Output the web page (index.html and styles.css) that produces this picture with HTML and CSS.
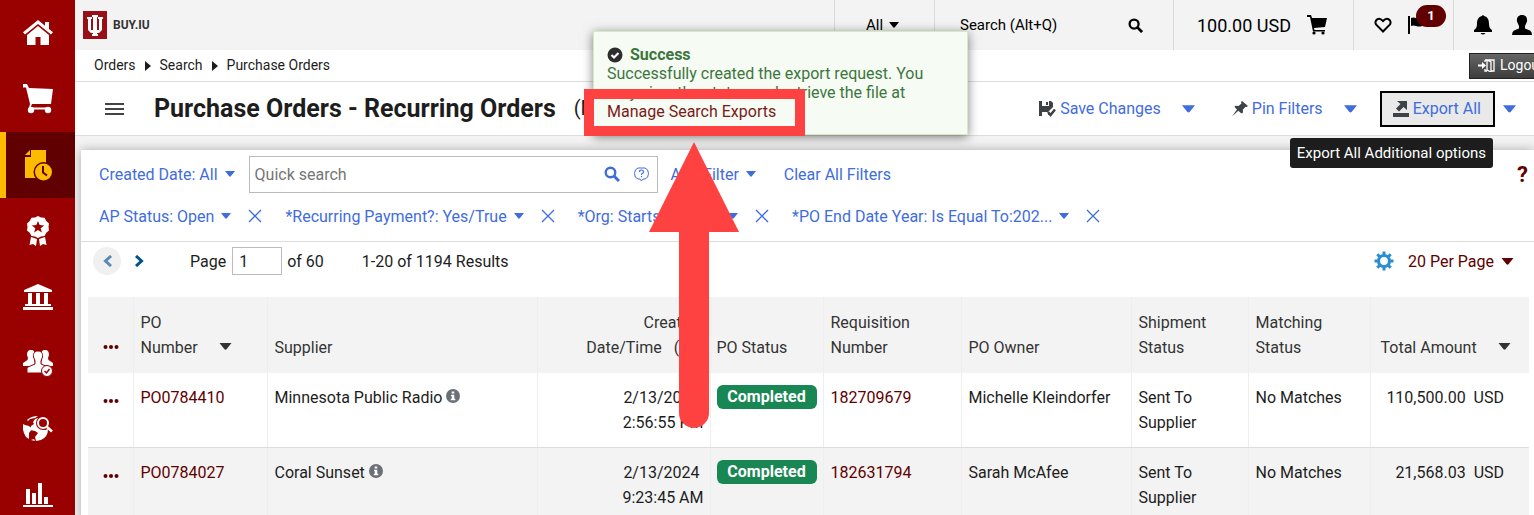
FILE: index.html
```html
<!DOCTYPE html>
<html lang="en">
<head>
  <meta charset="UTF-8">
  <meta name="viewport" content="width=device-width, initial-scale=1.0">
  <title>Purchase Orders - Recurring Orders</title>
  <link rel="stylesheet" href="styles.css">
</head>
<body>

  <!-- ===== SHARED ICONS ===== -->
  <svg class="sprite" aria-hidden="true">
    <symbol id="caret" viewBox="0 0 12 7"><path d="M0 0h12L7 6.300q-1 .9-2 0z"/></symbol>
    <symbol id="close" viewBox="0 0 14 14"><path d="M1 1l12 12M13 1L1 13" fill="none" stroke="currentColor" stroke-width="1.300"/></symbol>
    <symbol id="search" viewBox="0 0 16 16"><circle cx="6.500" cy="6.500" r="4.800" fill="none" stroke="currentColor" stroke-width="2.400"/><path d="M10 10l5 5" stroke="currentColor" stroke-width="3"/></symbol>
    <symbol id="info" viewBox="0 0 14 14"><circle cx="7" cy="7" r="7"/><path d="M5.700 2.500h2.600v2H5.700zM5 5.800h3.300v3.900h1v1.500H4.800V9.700h1V7.300H5z" fill="#fff"/></symbol>
    <symbol id="dots" viewBox="0 0 16 4"><circle cx="2.500" cy="2" r="2"/><circle cx="8" cy="2" r="2"/><circle cx="13.500" cy="2" r="2"/></symbol>
  </svg>

  <!-- ===== SIDEBAR ===== -->
  <nav class="sidebar" aria-label="Main">
    <a href="#" aria-label="Home">
      <svg width="30" height="30" viewBox="0 0 30 30"><path d="M15 2L0 14.200l2 2.300L15 6l13 10.500 2-2.300-4-3.300V4h-4v3.700z"/><path d="M15 8L4 17v10h8.500v-8h5v8H26V17z"/></svg>
    </a>
    <a href="#" aria-label="Shop">
      <svg width="30" height="30" viewBox="0 0 30 30"><path d="M0 0h4l2 4 24 1-2 15H9l-1.500 3.500H26v2H5.500L7 20 3 3.500H0z"/><circle cx="8" cy="26" r="3.200"/><circle cx="25" cy="26" r="3.200"/></svg>
    </a>
    <a href="#" class="active" aria-label="Orders">
      <svg width="30" height="32" viewBox="0 0 30 32"><path d="M8 1h15v28H2V8h6z"/><path d="M2 6l5-5v5z"/><circle cx="20.500" cy="23" r="10" fill="#600000"/><circle cx="20.500" cy="23" r="8.500"/><path d="M20 17v6.500l4 3" fill="none" stroke="#600000" stroke-width="2"/></svg>
    </a>
    <a href="#" aria-label="Contracts">
      <svg width="24" height="30" viewBox="0 0 24 30"><path d="M12 0l3 1.500 3.500.3L20.300 5 23 7.500 22.500 11l.5 3.500-2.700 2.300L18.500 20l-3.500.4L12 22l-3-1.600-3.500-.4-1.800-3.200L1 14.500 1.500 11 1 7.500 3.700 5l1.800-3.200L9 1.500z"/><path d="M12 5l1.700 4.100 4.500.3-3.500 2.800 1.200 4.300L12 14.100l-3.900 2.400 1.200-4.300-3.500-2.800 4.500-.3z" fill="#900"/><path d="M5 21l6 2-1 7-3-2-3.500 1zM19 21l-6 2 1 7 3-2 3.500 1z"/></svg>
    </a>
    <a href="#" aria-label="Accounts payable">
      <svg width="30" height="28" viewBox="0 0 30 28"><path d="M15 1l14 6v2H1V7zM5 10h4v11H5zM13 10h4v11h-4zM21 10h4v11h-4zM2 21h26v2H2zM0 24h30v3H0z"/></svg>
    </a>
    <a href="#" aria-label="Suppliers">
      <svg width="30" height="28" viewBox="0 0 30 28"><path d="M8 1c3 0 4 2 3.700 5l-.7 5 1 3-2 3H0v-3l4.500-3L5 9 4 6c0-3 1-5 4-5zM22 1c3 0 4 2 4 5l-1 3 .5 2 4.500 3v3H20l-2-3 1-3-.7-5C18 3 19 1 22 1z"/><path d="M15 2c3.500 0 5 2.500 4.500 6L18 12v3l8 3.500V24H4v-5.500L12 15v-3l-1.500-4C10 4.500 11.500 2 15 2z" stroke="#900"/><circle cx="24" cy="22" r="5.500" stroke="#900"/><path d="M21.500 22l2 2 3-4" fill="none" stroke="#900" stroke-width="1.400"/></svg>
    </a>
    <a href="#" aria-label="Sourcing">
      <svg width="30" height="26" viewBox="0 0 30 26"><path d="M0 8l2 1 4 1 3 3-3 4v6l-3-2Q-1 15 0 8zM4 4q4-4 11-4l-3 2-5 1-2 2zM12 3l3-1v6l2 4 5 2 3-1q0 8-7 11l-5 1-1-4 3-4-3-2-5-1 1-4 3-2-1-2zM8 24l3-1 1 2z"/><circle cx="20" cy="7" r="7" fill="#900"/><circle cx="20" cy="7" r="5" fill="none" stroke="#fff" stroke-width="2"/><path d="M23.500 10.500L29 15.500" stroke="#fff" stroke-width="2.500"/></svg>
    </a>
    <a href="#" aria-label="Reporting">
      <svg width="30" height="26" viewBox="0 0 30 26"><path d="M3 7h4v15H3zM9 11h4v11H9zM15 1h4v21h-4zM21 15h4v7h-4zM0 23h30v2H0z"/></svg>
    </a>
  </nav>

  <div class="page">

    <!-- ===== TOP BAR ===== -->
    <header class="topbar">
      <a href="#" class="brand">
        <svg width="24" height="28" viewBox="0 0 24 28"><path fill="#990f18" d="M0 0h24v28H0z"/><path d="M9 4h6v2h-1v13h2V8h-1V6h5v2h-1v11l-3 3h-2v1h1v2H9v-2h1v-1H8l-3-3V8H4V6h5v2H8v11h2V6H9z" fill="#fff"/></svg>
        <span>BUY.IU</span>
      </a>
      <form class="quick">
        <div class="scope">
          <select aria-label="Search scope"><option>All</option></select>
          <svg width="10" height="6"><use href="#caret"/></svg>
        </div>
        <div class="site-search">
          <input type="text" aria-label="Search" placeholder="Search (Alt+Q)">
          <button type="button" aria-label="Go"><svg width="15" height="15"><use href="#search"/></svg></button>
        </div>
      </form>
      <a href="#" class="cart">
        <span>100.00 USD</span>
        <svg width="20" height="20" viewBox="0 0 20 20"><path d="M0 0h4l1 3h15l-2 9-11 1 .5 2H18v1.500H6L3 2H0z"/><circle cx="7" cy="18" r="1.600"/><circle cx="16" cy="18" r="1.600"/></svg>
      </a>
      <div class="alerts">
        <button type="button" aria-label="Bookmarks"><svg width="18" height="16" viewBox="0 0 18 16"><path d="M9 14.500L2.200 7.600C-.5 4 4.500-1 9 4c4.500-5 9.500 0 6.800 3.600z" fill="none" stroke="#000" stroke-width="2"/></svg></button>
        <button type="button" class="flag" aria-label="Action items"><svg width="14" height="18" viewBox="0 0 14 18"><path d="M0 0h2v18H0zM3 2c4-2 6 2 11 0v8c-5 2-7-2-11 0z"/></svg><span class="count">1</span></button>
      </div>
      <div class="user">
        <button type="button" aria-label="Notifications"><svg width="18" height="20" viewBox="0 0 18 20"><path d="M8 1q1-2 2 0c4 1 5 4 5 8 0 3 1 5 3 6v2H0v-2c2-1 3-3 3-6 0-4 1-7 5-8zM6.500 18h5q-2.500 3-5 0z"/></svg></button>
        <button type="button" aria-label="Profile"><svg width="20" height="20" viewBox="0 0 20 20"><path d="M10 0c4 0 5.500 3 5 6.500L13 11v2.500l5 2q2 1 2 4.500H0q0-3.500 2-4.500l5-2V11L5 6.500C4.500 3 6 0 10 0z"/></svg></button>
      </div>
    </header>

    <!-- ===== BREADCRUMB ===== -->
    <div class="crumbs">
      <a href="#">Orders</a>
      <svg width="6" height="10" viewBox="0 0 6 10"><path d="M0 0l6 5-6 5z"/></svg>
      <a href="#">Search</a>
      <svg width="6" height="10" viewBox="0 0 6 10"><path d="M0 0l6 5-6 5z"/></svg>
      <a href="#">Purchase Orders</a>
      <button type="button" class="logout">
        <svg width="17" height="13" viewBox="0 0 17 13"><path d="M0 5.500h4V3l4 3.500L4 10V7.500H0z"/><path d="M7 1h9v11h-3M7 1v2M7 10v2h2M9 1l4 2v10l-4-2z" fill="none" stroke="#fff" stroke-width="1.300"/></svg>
        Logout
      </button>
    </div>

    <!-- ===== TITLE ===== -->
    <div class="title-bar">
      <button type="button" class="menu" aria-label="Menu"><svg width="19" height="12" viewBox="0 0 19 12"><path d="M0 0h19v2H0zM0 5h19v2H0zM0 10h19v2H0z"/></svg></button>
      <h1>Purchase Orders - Recurring Orders</h1>
      <span class="state">(New)</span>
      <div class="actions">
        <button type="button" class="action">
          <svg width="17" height="16" viewBox="0 0 17 16"><path d="M0 0h3v5h7V0h2l2 2v4l-5 5 1 1v2H9v-3H3v4H0zM7 1h2v3H7z"/><path d="M9 11l2.500 3L16 8.500" fill="none" stroke="#3d4247" stroke-width="2.500"/></svg>
          Save Changes
        </button>
        <button type="button" class="drop" aria-label="Save options"><svg width="13" height="8"><use href="#caret"/></svg></button>
        <button type="button" class="action">
          <svg width="16" height="16" viewBox="0 0 16 16"><path d="M10 0l6 5-1.500 1-1-.3-2.700 3 .2 2.800-1.500 1L6.300 9.800 0 15.500l5-7L2.500 6l1-1.300 3 .3 3-2.500L9 1z"/></svg>
          Pin Filters
        </button>
        <button type="button" class="drop" aria-label="Pin options"><svg width="13" height="8"><use href="#caret"/></svg></button>
        <button type="button" class="action export">
          <svg width="16" height="16" viewBox="0 0 16 16"><path d="M0 12h16v4H0zM4 0h10v9l-3.500-3L6 10.500l-3-3L7.500 3z"/></svg>
          Export All
          <span class="tooltip" role="tooltip">Export All Additional options</span>
        </button>
        <button type="button" class="drop" aria-label="Export options"><svg width="13" height="8"><use href="#caret"/></svg></button>
      </div>
    </div>

    <!-- ===== RESULTS PANEL ===== -->
    <main class="panel">
      <section class="filters">
        <div class="filter-row">
          <button type="button" class="filter">Created Date: All <svg width="10" height="6"><use href="#caret"/></svg></button>
          <div class="search-box">
            <input type="text" aria-label="Quick search" placeholder="Quick search">
            <button type="button" aria-label="Search"><svg width="16" height="16"><use href="#search"/></svg></button>
            <button type="button" aria-label="Search help"><svg width="15" height="15" viewBox="0 0 15 15"><path d="M4 1h7q3.500 1 3.500 5.500T11 12H9l-1.500 2L6 12H4Q.500 11 .500 6.500T4 1z" fill="none" stroke="currentColor"/><path d="M5.500 5q0-2 2-2t2 2q0 1-2 2v1M7.500 9v1.300" fill="none" stroke="currentColor" stroke-width="1.200"/></svg></button>
          </div>
          <button type="button" class="filter">Add Filter <svg width="10" height="6"><use href="#caret"/></svg></button>
          <button type="button" class="filter clear">Clear All Filters</button>
          <button type="button" class="help" aria-label="Help">?</button>
        </div>
        <div class="filter-row chips">
          <div class="chip"><button type="button" class="filter">AP Status: Open <svg width="10" height="6"><use href="#caret"/></svg></button><button type="button" class="remove" aria-label="Remove AP Status"><svg width="14" height="14"><use href="#close"/></svg></button></div>
          <div class="chip"><button type="button" class="filter">*Recurring Payment?: Yes/True <svg width="10" height="6"><use href="#caret"/></svg></button><button type="button" class="remove" aria-label="Remove Recurring Payment"><svg width="14" height="14"><use href="#close"/></svg></button></div>
          <div class="chip"><button type="button" class="filter">*Org: Starts With:UA <svg width="10" height="6"><use href="#caret"/></svg></button><button type="button" class="remove" aria-label="Remove Org"><svg width="14" height="14"><use href="#close"/></svg></button></div>
          <div class="chip"><button type="button" class="filter">*PO End Date Year: Is Equal To:202... <svg width="10" height="6"><use href="#caret"/></svg></button><button type="button" class="remove" aria-label="Remove PO End Date Year"><svg width="14" height="14"><use href="#close"/></svg></button></div>
        </div>
      </section>

      <section class="pager">
        <button type="button" class="prev" aria-label="Previous page"><svg width="9" height="12" viewBox="0 0 9 12"><path d="M8 1L2.500 6 8 11" fill="none" stroke="currentColor" stroke-width="3"/></svg></button>
        <button type="button" class="next" aria-label="Next page"><svg width="9" height="12" viewBox="0 0 9 12"><path d="M1 1l5.500 5L1 11" fill="none" stroke="currentColor" stroke-width="3"/></svg></button>
        <label for="page-number">Page</label>
        <input type="text" id="page-number" value="1">
        <span>of 60</span>
        <span class="total">1-20 of 1194 Results</span>
        <button type="button" class="settings" aria-label="Settings"><svg width="20" height="20" viewBox="0 0 20 20"><circle cx="10" cy="10" r="5.500" fill="none" stroke="currentColor" stroke-width="3.200"/><path d="M10 .5v4M10 15.500v4M.5 10h4M15.500 10h4M3.300 3.300L6 6M14 14l2.700 2.700M16.700 3.300L14 6M6 14l-2.700 2.700" stroke="currentColor" stroke-width="3"/></svg></button>
        <div class="per-page">
          <select aria-label="Results per page"><option>20 Per Page</option></select>
          <svg width="13" height="7"><use href="#caret"/></svg>
        </div>
      </section>

      <table class="results">
        <colgroup>
          <col class="c-menu"><col class="c-po"><col class="c-supplier"><col class="c-date"><col class="c-status"><col class="c-req"><col class="c-owner"><col class="c-ship"><col class="c-match"><col class="c-amount">
        </colgroup>
        <thead>
          <tr>
            <th><button type="button" class="dots" aria-label="Select columns"><svg width="16" height="4"><use href="#dots"/></svg></button></th>
            <th><button type="button" class="sort"><span>PO<br>Number</span><svg width="13" height="7"><use href="#caret"/></svg></button></th>
            <th>Supplier</th>
            <th class="date">Creation<br>Date/Time &nbsp; (ET)</th>
            <th class="status">PO Status</th>
            <th>Requisition<br>Number</th>
            <th>PO Owner</th>
            <th>Shipment<br>Status</th>
            <th>Matching<br>Status</th>
            <th><button type="button" class="sort amount"><span>Total Amount</span><svg width="13" height="7"><use href="#caret"/></svg></button></th>
          </tr>
        </thead>
        <tbody>
          <tr>
            <td><button type="button" class="dots" aria-label="Row actions"><svg width="16" height="4"><use href="#dots"/></svg></button></td>
            <td><a href="#">PO0784410</a></td>
            <td>Minnesota Public Radio <svg class="info" width="14" height="14"><use href="#info"/></svg></td>
            <td class="date">2/13/2024&nbsp;<br>2:56:55 PM</td>
            <td class="status"><span class="badge">Completed</span></td>
            <td><a href="#">182709679</a></td>
            <td>Michelle Kleindorfer</td>
            <td>Sent To Supplier</td>
            <td>No Matches</td>
            <td class="money">110,500.00 &nbsp;USD</td>
          </tr>
          <tr>
            <td><button type="button" class="dots" aria-label="Row actions"><svg width="16" height="4"><use href="#dots"/></svg></button></td>
            <td><a href="#">PO0784027</a></td>
            <td>Coral Sunset <svg class="info" width="14" height="14"><use href="#info"/></svg></td>
            <td class="date">2/13/2024&nbsp;<br>9:23:45 AM</td>
            <td class="status"><span class="badge">Completed</span></td>
            <td><a href="#">182631794</a></td>
            <td>Sarah McAfee</td>
            <td>Sent To Supplier</td>
            <td>No Matches</td>
            <td class="money">21,568.03 &nbsp;USD</td>
          </tr>
        </tbody>
      </table>
    </main>
  </div>

  <!-- ===== SUCCESS MESSAGE ===== -->
  <div class="toast" role="status">
    <div class="toast-title">
      <svg width="16" height="16" viewBox="0 0 16 16"><circle cx="8" cy="8" r="7.500" fill="#2d2d2d"/><path d="M4.500 8l2.500 2.500L11.500 6" fill="none" stroke="#fff" stroke-width="2.200"/></svg>
      <strong>Success</strong>
    </div>
    <p>Successfully created the export request. You may view the status and retrieve the file at</p>
    <a href="#">Manage Search Exports</a>
  </div>

  <!-- ===== HIGHLIGHT ===== -->
  <div class="highlight"></div>
  <svg class="arrow" width="90" height="286" viewBox="0 0 90 286" aria-hidden="true"><path d="M45 0l45 90H60v181a15 15 0 0 1-30 0V90H0z"/></svg>

</body>
</html>
```
FILE: styles.css
```css
* {
  box-sizing: border-box;
  margin: 0;
  padding: 0;
}

body {
  display: flex;
  height: 100vh;
  overflow: hidden;
  position: relative;
  font-family: Roboto, Arial, sans-serif;
  font-size: 16px;
  line-height: 25px;
  color: #1d1d1d;
  background: #f3f3f3;
}

button, input, select {
  font: inherit;
  color: inherit;
  background: none;
  border: none;
  outline: none;
}

button {
  cursor: pointer;
  white-space: nowrap;
}

a {
  color: #600000;
  text-decoration: none;
}

svg {
  flex: none;
  fill: currentColor;
}

.sprite {
  display: none;
}

/* sidebar */
.sidebar {
  width: 75px;
  flex: none;
  overflow: hidden;
  background: #900;
  z-index: 2;
}

.sidebar a {
  display: flex;
  align-items: center;
  justify-content: center;
  height: 66px;
  color: #fff;
}

.sidebar a.active {
  color: #fdbb00;
  background: #600000;
  border-left: 6px solid #fdbb00;
  padding-right: 6px;
}

.page {
  flex: 1;
  min-width: 0;
  display: flex;
  flex-direction: column;
  overflow: hidden;
}

/* top bar */
.topbar {
  display: flex;
  flex: none;
  height: 50px;
  font-size: 15px;
  color: #000;
}

.brand {
  display: flex;
  align-items: center;
  gap: 6px;
  flex: 1;
  padding-left: 8px;
  font-size: 12px;
  font-weight: bold;
  color: #333;
}

.quick {
  display: flex;
}

.scope, .site-search, .cart, .alerts, .user {
  display: flex;
  align-items: center;
  border-left: 1px solid #d9d9d9;
}

.scope {
  width: 100px;
  padding-left: 31px;
  gap: 5px;
}

.scope select, .per-page select {
  appearance: none;
}

.site-search {
  width: 239px;
  padding: 0 30px 0 25px;
}

.site-search input {
  flex: 1;
  min-width: 0;
}

::placeholder {
  color: inherit;
  opacity: 1;
}

.site-search button {
  display: flex;
}

.cart {
  width: 180px;
  padding-left: 23px;
  gap: 16px;
  font-size: 18px;
  color: #000;
}

.alerts {
  width: 100px;
  padding-left: 20px;
  gap: 16px;
}

.alerts button, .user button {
  display: flex;
}

.flag {
  position: relative;
}

.count {
  position: absolute;
  left: 8px;
  top: -11px;
  width: 30px;
  border-radius: 11px;
  font-size: 13px;
  line-height: 22px;
  font-weight: bold;
  color: #fff;
  background: #600000;
}

.user {
  width: 81px;
  padding-left: 20px;
  gap: 20px;
}

/* breadcrumb */
.crumbs {
  display: flex;
  align-items: center;
  flex: none;
  gap: 9px;
  height: 32px;
  padding-left: 19px;
  font-size: 14px;
  background: #fff;
  border-bottom: 1px solid #ddd;
}

.crumbs a {
  color: #1d1d1d;
}

.logout {
  display: flex;
  align-items: center;
  flex: none;
  gap: 5px;
  width: 76px;
  height: 26px;
  margin-left: auto;
  margin-right: -11px;
  padding-left: 8px;
  color: #fff;
  border: 1px solid #222;
  background: linear-gradient(#666, #3d3d3d);
}

/* title */
.title-bar {
  display: flex;
  align-items: center;
  flex: none;
  height: 54px;
  padding-left: 30px;
  padding-right: 18px;
  background: #fff;
  border-bottom: 1px solid #ddd;
}

.menu {
  display: flex;
  margin-right: 30px;
  color: #444;
}

h1 {
  font-size: 25px;
  font-weight: bold;
  white-space: nowrap;
}

.state {
  margin-left: 18px;
  font-size: 20px;
}

.actions {
  display: flex;
  align-items: center;
  margin-left: auto;
}

.action {
  display: flex;
  align-items: center;
  gap: 4px;
  color: #3f6ddd;
}

.action svg {
  color: #3d4247;
}

.drop {
  display: flex;
  color: #3f6ddd;
  margin: 0 37px 0 21px;
}

.export {
  position: relative;
  height: 36px;
  margin-left: -14px;
  padding: 0 12px 0 11px;
  border: 2px solid #000;
  background: #e9e9e9;
}

.export + .drop {
  margin: 0 0 0 8px;
}

.tooltip {
  position: absolute;
  right: 0;
  top: 45px;
  padding: 0 7px;
  border-radius: 3px;
  font-size: 15px;
  line-height: 30px;
  color: #fff;
  background: #1d1d1d;
  z-index: 3;
}

/* panel */
.panel {
  flex: 1;
  margin: 14px 0 0 6px;
  background: #fff;
  box-shadow: 0 0 10px rgba(0, 0, 0, 0.3);
}

.filters {
  padding: 6px 6px 7px 18px;
  color: #3f6ddd;
  border-bottom: 1px solid #ddd;
}

.filter-row {
  display: flex;
  align-items: center;
  height: 36px;
}

.filter-row + .filter-row {
  margin-top: 6px;
}

.filter {
  display: flex;
  align-items: center;
  gap: 7px;
}

.search-box {
  display: flex;
  align-items: center;
  gap: 14px;
  width: 409px;
  height: 37px;
  margin: 0 13px 0 14px;
  padding: 0 8px 0 5px;
  border: 1px solid #bbb;
}

.search-box input {
  flex: 1;
  min-width: 0;
}

.search-box ::placeholder {
  color: #757575;
}

.search-box button, .remove {
  display: flex;
}

.clear {
  margin-left: 28px;
}

.help {
  margin-left: auto;
  font-size: 22px;
  font-weight: bold;
  color: #600000;
}

.chips {
  gap: 23px;
}

.chip {
  display: flex;
  align-items: center;
  gap: 17px;
}

/* pager */
.pager {
  display: flex;
  align-items: center;
  height: 55px;
  padding: 0 20px 17px 12px;
}

.prev, .next {
  display: flex;
  align-items: center;
  justify-content: center;
  width: 28px;
  height: 28px;
  border-radius: 50%;
  color: #00538a;
}

.prev {
  color: #5a8bb8;
  background: #f0f0f0;
}

.next {
  margin: 0 37px 0 4px;
}

.pager input {
  width: 50px;
  height: 28px;
  margin: 0 5px 0 6px;
  padding-left: 6px;
  border: 1px solid #bbb;
}

.total {
  margin-left: 38px;
}

.settings {
  display: flex;
  margin-left: auto;
  color: #2a8fd0;
}

.per-page {
  display: flex;
  align-items: center;
  gap: 7px;
  margin-left: 14px;
  color: #600000;
}

/* results */
.results {
  width: calc(100% - 12px);
  margin-left: 7px;
  table-layout: fixed;
  border-collapse: collapse;
}

.c-menu { width: 45px; }
.c-po { width: 134px; }
.c-date { width: 173px; }
.c-status { width: 113px; }
.c-req { width: 138px; }
.c-owner { width: 170px; }
.c-ship { width: 117px; }
.c-match { width: 122px; }
.c-amount { width: 159px; }

th, td {
  padding: 12px 6px 12px 7px;
  text-align: left;
  vertical-align: top;
  border-right: 1px solid #eee;
}

th:last-child, td:last-child {
  border-right: none;
}

thead tr, tbody tr:nth-child(even) {
  background: #f3f3f3;
}

th {
  padding: 13px 6px 13px 7px;
  font-weight: normal;
  color: #333;
  vertical-align: bottom;
}

td {
  border-bottom: 1px solid #ddd;
}

th:first-child, td:first-child {
  text-align: center;
}

th:first-child {
  padding-bottom: 17px;
}

.dots {
  color: #600000;
}

.sort {
  display: flex;
  align-items: flex-end;
  gap: 21px;
  text-align: left;
}

.sort svg {
  margin-bottom: 10px;
}

.sort.amount {
  margin-left: 3px;
}

.info {
  color: #6b6f78;
}

.date {
  text-align: right;
}

.badge {
  display: block;
  width: 100px;
  border-radius: 6px;
  line-height: 24px;
  font-weight: bold;
  text-align: center;
  color: #fff;
  background: #198754;
}

th.status, td.status {
  padding-left: 6px;
}

td.money {
  padding-right: 25px;
  text-align: right;
}

/* message */
.toast {
  position: absolute;
  left: 593px;
  top: 31px;
  width: 375px;
  padding: 13px;
  line-height: 19px;
  color: #3c763d;
  background: #f6fbf3;
  border: 1px solid #d6e9c6;
  box-shadow: 0 2px 10px rgba(0, 0, 0, 0.5);
  z-index: 4;
}

.toast-title {
  display: flex;
  align-items: center;
  gap: 7px;
}

.toast a {
  color: #7a1a1a;
}

.highlight {
  position: absolute;
  left: 584px;
  top: 89px;
  width: 221px;
  height: 47px;
  border: 10px solid #fe4242;
  z-index: 5;
}

.arrow {
  position: absolute;
  left: 649px;
  top: 142px;
  fill: #fe4242;
  z-index: 5;
}
```
